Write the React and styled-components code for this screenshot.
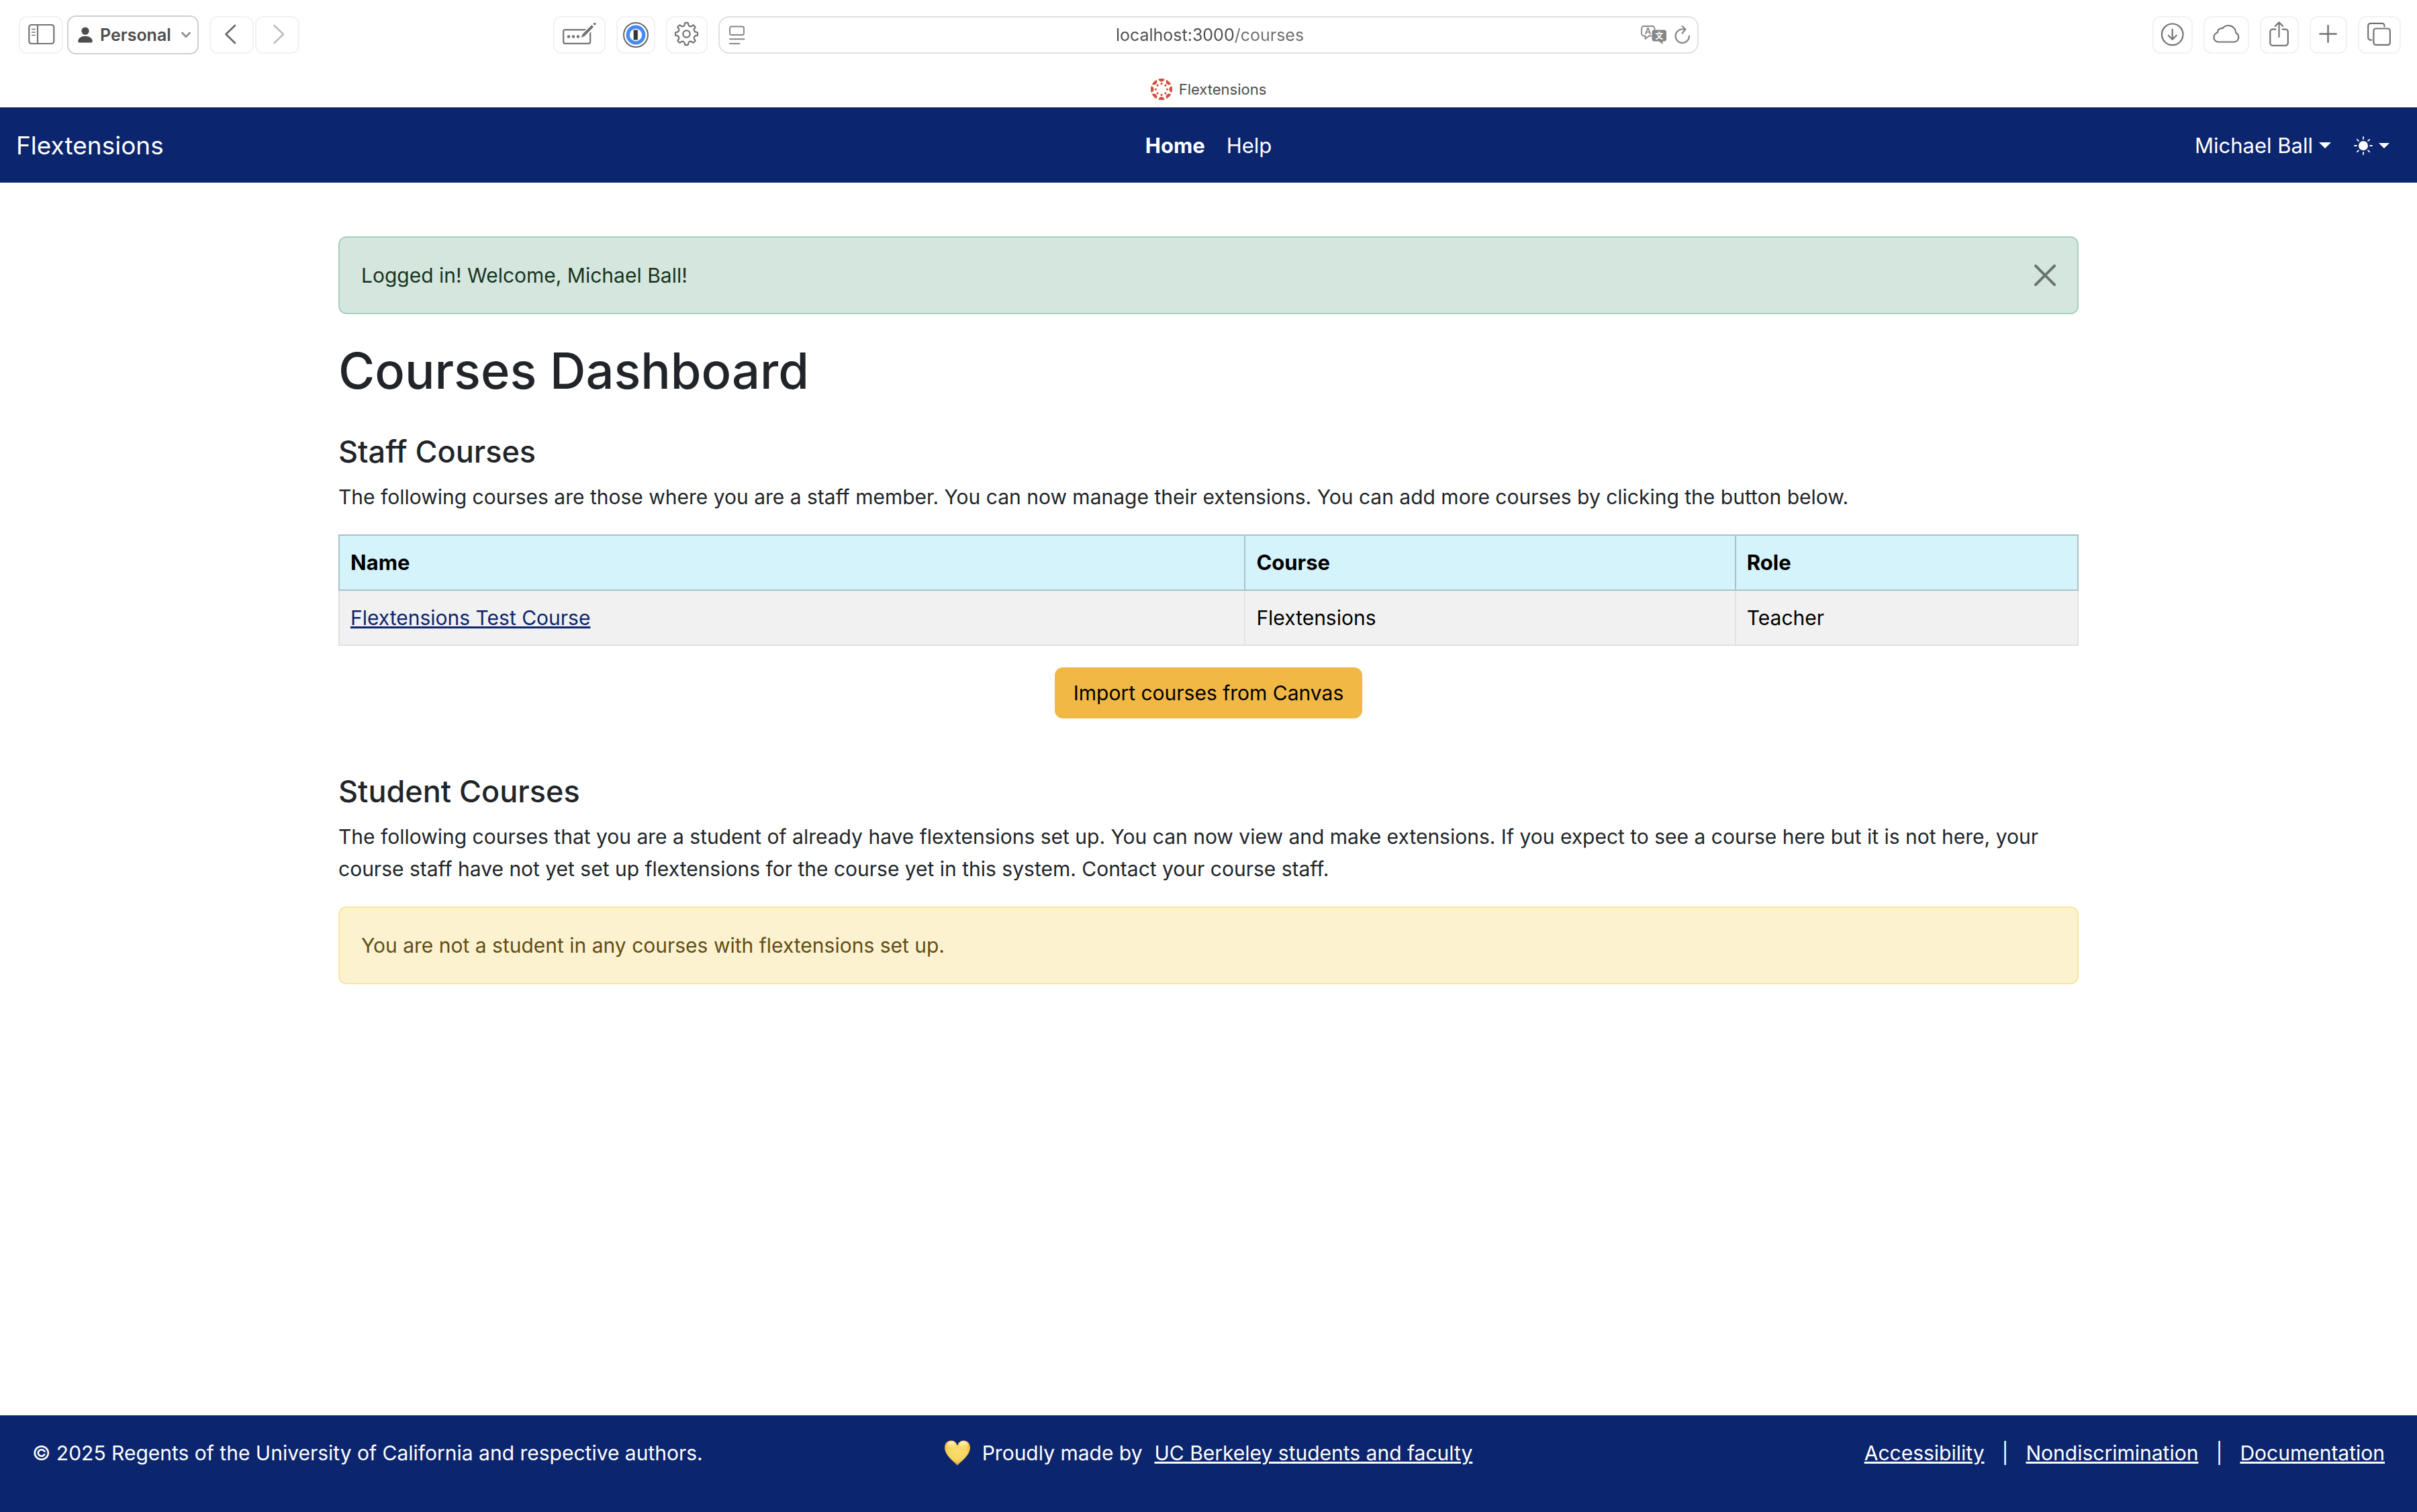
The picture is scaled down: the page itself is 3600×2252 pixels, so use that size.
import React from "react";
import styled, { createGlobalStyle, css } from "styled-components";

const NAVY = "#0b256e";
const ICON = "#737373";

const GlobalStyle = createGlobalStyle`
  *, *::before, *::after { box-sizing: border-box; }
  body {
    margin: 0;
    background: #fff;
    color: #212529;
    font-family: Inter, "Liberation Sans", sans-serif;
    font-size: 30px;
    line-height: 48px;
  }
  button, input { font: inherit; }
`;

const Page = styled.div`
  min-height: 100vh;
  display: flex;
  flex-direction: column;
`;

/* ---------- Browser chrome ---------- */

const Chrome = styled.header`
  height: 160px;
  display: flex;
  flex-direction: column;
  color: #4d4d4d;
`;

const Toolbar = styled.div`
  height: 104px;
  padding: 0 24px;
  display: grid;
  grid-template-columns: 1fr minmax(0, 1460px) 1fr;
  column-gap: 16px;
  align-items: center;
`;

const ToolSide = styled.div`
  display: flex;
  align-items: center;
  justify-content: ${(p) => (p.$end ? "flex-end" : "space-between")};
  gap: 16px;
  padding-left: 4px;
`;

const ToolGroup = styled.div`
  display: flex;
  align-items: center;
  gap: ${(p) => p.$gap}px;
`;

const ToolButton = styled.button`
  width: ${(p) => p.$w}px;
  height: 56px;
  padding: 0;
  border: 0;
  border-radius: 12px;
  background: #fff;
  box-shadow: inset 0 0 0 2px #f2f2f2;
  color: ${(p) => p.$color || ICON};
  svg { display: block; }
`;

const ProfileButton = styled.button`
  height: 58px;
  padding: 0 10px 0 14px;
  display: flex;
  align-items: center;
  gap: 11px;
  border: 2px solid #cfcfcf;
  border-radius: 13px;
  background: #fff;
  color: #4d4d4d;
  font-size: 25px;
  font-weight: 600;
  line-height: 32px;
`;

const ProfileName = styled.span`
  padding-right: 4px;
`;

const AddressBar = styled.div`
  height: 56px;
  padding: 0 10px 0 14px;
  display: flex;
  align-items: center;
  border: 2px solid #e0e0e0;
  border-radius: 16px;
  color: #858585;
`;

const AddressSide = styled.div`
  width: 80px;
  display: flex;
  justify-content: ${(p) => (p.$end ? "flex-end" : "flex-start")};
  gap: 12px;
`;

const AddressInput = styled.input`
  flex: 1;
  min-width: 0;
  border: 0;
  outline: 0;
  padding: 0;
  text-align: center;
  font-size: 25px;
  line-height: 32px;
  background: linear-gradient(90deg, #4d4d4d calc(50% + 36px), #6e6e6e calc(50% + 36px));
  background-clip: text;
  -webkit-text-fill-color: transparent;
`;

const GhostButton = styled.button`
  padding: 0;
  border: 0;
  background: none;
  color: inherit;
  svg { display: block; }
`;

const TabStrip = styled.div`
  height: 56px;
  padding-top: 2px;
  display: flex;
  align-items: center;
  justify-content: center;
  gap: 10px;
  font-size: 22px;
  line-height: 28px;
`;

/* ---------- App navigation ---------- */

const Navbar = styled.nav`
  height: 112px;
  padding: 0 24px;
  display: grid;
  grid-template-columns: 1fr auto 1fr;
  align-items: center;
  background: ${NAVY};
  border-top: 1px solid #020a4c;
  color: #fff;
  font-size: 31px;
`;

const Brand = styled.a`
  color: #fff;
  font-size: 37px;
  line-height: 60px;
  text-decoration: none;
`;

const NavLinks = styled.div`
  display: flex;
`;

const NavLink = styled.a`
  padding: 16px;
  color: #fff;
  font-weight: ${(p) => (p.$active ? 700 : 400)};
  text-decoration: none;
`;

const NavMenus = styled(NavLinks)`
  justify-content: flex-end;
`;

const MenuButton = styled.button`
  padding: 16px 17px;
  display: flex;
  align-items: center;
  gap: ${(p) => p.$gap}px;
  border: 0;
  background: none;
  color: #fff;
`;

const Caret = styled.span`
  border-style: solid;
  border-color: currentColor transparent transparent;
  border-width: ${(p) => p.$size}px ${(p) => p.$size}px 0;
`;

/* ---------- Dashboard ---------- */

const Main = styled.main`
  width: 100%;
  max-width: 2640px;
  margin: 0 auto;
  padding: 80px 24px;
  flex: 1;
`;

const tones = {
  success: css`
    background: #d5e6de;
    border-color: #a9cfbe;
    color: #16341f;
  `,
  warning: css`
    background: #fdf2d0;
    border-color: #fae5a0;
    color: #614d14;
  `,
};

const Alert = styled.div`
  padding: 32px;
  display: flex;
  align-items: center;
  justify-content: space-between;
  border: 2px solid;
  border-radius: 12px;
  ${(p) => tones[p.$tone]}
`;

const CloseButton = styled(GhostButton)`
  color: rgba(0, 0, 0, 0.5);
`;

const Title = styled.h1`
  margin: 36px 0 44px;
  font-size: 74px;
  font-weight: 500;
  line-height: 96px;
`;

const Section = styled.section`
  & + & { margin-top: 80px; }
`;

const SectionTitle = styled.h2`
  margin: 0 0 14px;
  font-size: 45px;
  font-weight: 500;
  line-height: 58px;
`;

const Lead = styled.p`
  margin: 0 0 32px;
`;

const CourseTable = styled.table`
  width: 100%;
  margin-bottom: 32px;
  border-collapse: collapse;
  table-layout: fixed;
  color: #000;
`;

const Column = styled.col`
  width: ${(p) => p.$width};
`;

const HeadCell = styled.th`
  padding: 16px;
  border: 2px solid #a9c2c9;
  background: #d5f3fb;
  font-size: 31px;
  font-weight: 700;
  text-align: left;
`;

const Cell = styled.td`
  padding: 16px;
  border: 2px solid #dee2e6;
  border-top-color: #a9c2c9;
  background: #f1f1f1;
`;

const CourseLink = styled.a`
  color: ${NAVY};
`;

const Actions = styled.div`
  display: flex;
  justify-content: center;
`;

const PrimaryButton = styled.button`
  padding: 14px 28px;
  border: 0;
  border-radius: 12px;
  background: #f1b845;
  color: #000;
`;

/* ---------- Footer ---------- */

const Footer = styled.footer`
  padding: 32px 48px 64px;
  display: grid;
  grid-template-columns: 1fr auto 1fr;
  background: ${NAVY};
  color: #fff;
`;

const FooterCredit = styled.div`
  display: flex;
  align-items: center;
  gap: 18px;
`;

const FooterLinks = styled.div`
  display: flex;
  justify-content: flex-end;
  gap: 26px;
`;

const FooterLink = styled.a`
  color: #fff;
`;

/* ---------- Icons ---------- */

const Icon = ({ w, h = 56, sw = 2.2, children }) => (
  <svg
    width={w}
    height={h}
    viewBox={`0 0 ${w} ${h}`}
    fill="none"
    stroke="currentColor"
    strokeWidth={sw}
    strokeLinecap="round"
    strokeLinejoin="round"
    aria-hidden="true"
  >
    {children}
  </svg>
);

const SidebarIcon = () => (
  <Icon w={66}>
    <rect x="15.3" y="13" width="37" height="28" rx="3.5" />
    <path d="M28 13v28" />
    <path d="M19.8 19.5h4.2M19.8 24h4.2M19.8 28.5h4.2" strokeWidth="1.7" />
  </Icon>
);

const PersonIcon = () => (
  <svg width="22" height="24" viewBox="0 0 22 24" fill="currentColor" aria-hidden="true">
    <circle cx="11" cy="6.2" r="5.6" />
    <path d="M.3 21.2C.3 17 5 13.8 11 13.8S21.7 17 21.7 21.2C21.7 22.8 21 23.4 19.6 23.4H2.4C1 23.4.3 22.8.3 21.2Z" />
  </svg>
);

const ChevronDownIcon = () => (
  <Icon w={14} h={10} sw={2.6}>
    <path d="M1.5 2l5.5 5.800L12.5 2" stroke="#8c8c90" />
  </Icon>
);

const BackIcon = () => (
  <Icon w={66} sw={2.6}>
    <path d="M38 14L24.5 27L38 40" />
  </Icon>
);

const ForwardIcon = () => (
  <Icon w={66} sw={2.6}>
    <path d="M28.5 14L42 27L28.5 40" />
  </Icon>
);

const PasswordIcon = () => (
  <Icon w={78}>
    <rect x="15.2" y="20.3" width="40" height="20.5" rx="2.5" />
    <g fill="currentColor" stroke="none">
      <circle cx="23" cy="30.5" r="2.3" />
      <circle cx="30" cy="30.5" r="2.3" />
      <circle cx="37" cy="30.5" r="2.3" />
    </g>
    <path d="M45 29L60.5 13.5" stroke="#fff" strokeWidth="8" strokeLinecap="butt" />
    <path d="M42.2 31.5L44 26.8L57.3 13.6L59.8 16L46.8 29.4Z" fill="currentColor" strokeWidth=".6" />
    <circle cx="61.7" cy="11.6" r="1.9" fill="currentColor" stroke="none" />
  </Icon>
);

const OnePasswordIcon = () => (
  <Icon w={58}>
    <circle cx="29" cy="28" r="18" stroke="#666" strokeWidth="2" />
    <circle cx="29" cy="28" r="11.8" stroke="#448af8" strokeWidth="5.2" />
    <rect x="26" y="20.5" width="6" height="15" stroke="#aaa" strokeWidth="1" fill="#333" />
  </Icon>
);

const polar = (cx, cy, r, deg) => {
  const a = (deg * Math.PI) / 180;
  return `${(cx + r * Math.cos(a)).toFixed(2)} ${(cy + r * Math.sin(a)).toFixed(2)}`;
};

const gearPath = (cx, cy) => {
  let d = "";
  for (let i = 0; i < 8; i += 1) {
    const t = i * 45 - 90;
    d += `${i ? "L" : "M"}${polar(cx, cy, 13.2, t - 14)}`;
    d += `Q${polar(cx, cy, 13.6, t - 10)} ${polar(cx, cy, 15, t - 10)}`;
    d += `Q${polar(cx, cy, 16.8, t - 9)} ${polar(cx, cy, 16.6, t - 5)}`;
    d += `L${polar(cx, cy, 16.6, t + 5)}`;
    d += `Q${polar(cx, cy, 16.8, t + 9)} ${polar(cx, cy, 15, t + 10)}`;
    d += `Q${polar(cx, cy, 13.6, t + 10)} ${polar(cx, cy, 13.2, t + 14)}`;
    d += `Q${polar(cx, cy, 11.6, t + 22.5)} ${polar(cx, cy, 13.2, t + 31)}`;
  }
  return `${d}Z`;
};

const GearIcon = () => (
  <Icon w={62}>
    <path d={gearPath(30.5, 26.5)} />
    <circle cx="30.5" cy="26.5" r="5.2" />
  </Icon>
);

const ReaderIcon = () => (
  <Icon w={24} h={28} sw={1.9}>
    <rect x="1" y="1.5" width="21" height="12.5" rx="2.5" />
    <path d="M1 20.3h21.5M1 27h14.5" />
  </Icon>
);

const TranslateIcon = () => (
  <Icon w={38} h={28} sw={1.8}>
    <path d="M15.5 15.5H12L6.5 20V15.5H4.5A3.5 3.5 0 0 1 1 12V4.5A3.5 3.5 0 0 1 4.5 1H17A3.5 3.5 0 0 1 20.5 4.5V6" />
    <path
      d="M20 6.5H34.5A3.5 3.5 0 0 1 38 10V20A3.5 3.5 0 0 1 34.5 23.5H32.5V28L27 23.5H20A3.5 3.5 0 0 1 16.5 20V10A3.5 3.5 0 0 1 20 6.5Z"
      fill="currentColor"
      stroke="none"
    />
    <text x="10.5" y="13" fontSize="13" fontWeight="600" textAnchor="middle" fill="currentColor" stroke="none">
      A
    </text>
    <text
      x="27.2"
      y="19.5"
      fontSize="12"
      fontWeight="700"
      fontFamily='"Noto Sans CJK SC", sans-serif'
      textAnchor="middle"
      fill="#fff"
      stroke="none"
    >
      文
    </text>
  </Icon>
);

const ReloadIcon = () => (
  <Icon w={24} h={28}>
    <path d="M22 15.5A10.2 10.2 0 1 1 11.8 5.5H16" />
    <path d="M11.5 1L16.5 5.8L11.5 11.5" />
  </Icon>
);

const DownloadIcon = () => (
  <Icon w={60}>
    <circle cx="29.7" cy="27.3" r="15.8" />
    <path d="M29.7 19.5V34.5M23.7 28.8L29.7 34.8L35.7 28.8" />
  </Icon>
);

const CloudIcon = () => (
  <Icon w={68}>
    <path d="M21.5 38.5H46A7.2 7.2 0 0 0 48.3 25A11.2 11.2 0 0 0 28.3 18.3A6.2 6.2 0 0 0 20.8 24.6A7.1 7.1 0 0 0 21.5 38.5Z" />
  </Icon>
);

const ShareIcon = () => (
  <Icon w={58}>
    <path d="M23.3 19.7H18.8A3.5 3.5 0 0 0 15.3 23.2V40.3A3.5 3.5 0 0 0 18.8 43.8H38.3A3.5 3.5 0 0 0 41.8 40.3V23.2A3.5 3.5 0 0 0 38.3 19.7H33.8" />
    <path d="M28.5 31V9.5M22.8 15L28.5 9.3L34.2 15" />
  </Icon>
);

const PlusIcon = () => (
  <Icon w={56} sw={2.5}>
    <path d="M15.3 26.5H39.7M27.5 14.3V38.7" />
  </Icon>
);

const TabsIcon = () => (
  <Icon w={64}>
    <rect x="23.4" y="18.5" width="24.5" height="24.4" rx="3.5" />
    <path d="M20.5 35.6H18.7A3.5 3.5 0 0 1 15.2 32.1V14.3A3.5 3.5 0 0 1 18.7 10.8H36A3.5 3.5 0 0 1 39.5 14.3V15.5" />
  </Icon>
);

const RAYS = [0, 45, 90, 135, 180, 225, 270, 315];

const CanvasLogo = () => (
  <svg width="32" height="32" viewBox="0 0 32 32" fill="#d64c3b" aria-hidden="true">
    <clipPath id="disc">
      <circle cx="16" cy="16" r="16" />
    </clipPath>
    <g clipPath="url(#disc)">
      {RAYS.map((a) => (
        <g key={a} transform={`rotate(${a} 16 16)`}>
          <circle cx="16" cy="0" r="4.7" />
          <circle cx="16" cy="7.6" r="1.6" />
        </g>
      ))}
    </g>
  </svg>
);

const SunIcon = () => (
  <Icon w={28} h={28} sw={1.8}>
    <circle cx="14" cy="14" r="7" fill="currentColor" stroke="none" />
    {RAYS.map((a) => (
      <path key={a} d="M14 1V4" transform={`rotate(${a} 14 14)`} />
    ))}
  </Icon>
);

const CloseIcon = () => (
  <Icon w={32} h={32} sw={4}>
    <path d="M2 2L30 30M30 2L2 30" />
  </Icon>
);

const HeartIcon = () => (
  <svg width="38" height="38" viewBox="0 0 38 38" aria-hidden="true">
    <defs>
      <radialGradient id="heart" cx=".5" cy=".4" r=".62">
        <stop offset="0" stopColor="#fae070" />
        <stop offset=".6" stopColor="#f8d45f" />
        <stop offset="1" stopColor="#e29a3e" />
      </radialGradient>
      <linearGradient id="shine" x1="0" y1="0" x2="0" y2="1">
        <stop offset="0" stopColor="#fffbe0" />
        <stop offset="1" stopColor="#fae070" stopOpacity="0" />
      </linearGradient>
    </defs>
    <path
      d="M19 37.8C17.5 34.5 0 24 0 11C0 4.5 4.5 .5 9.8 .5C14.5 .5 17.6 3.5 19 8.5C20.4 3.5 23.5 .5 28.2 .5C33.5 .5 38 4.5 38 11C38 24 20.5 34.5 19 37.8Z"
      fill="url(#heart)"
    />
    <ellipse cx="9.5" cy="7.5" rx="6.5" ry="5.5" fill="url(#shine)" />
    <ellipse cx="28.5" cy="7.5" rx="6.5" ry="5.5" fill="url(#shine)" />
  </svg>
);

/* ---------- Data ---------- */

const leftTools = [
  { label: "AutoFill passwords", w: 78, Glyph: PasswordIcon },
  { label: "1Password", w: 58, Glyph: OnePasswordIcon },
  { label: "Extension settings", w: 62, Glyph: GearIcon },
];

const rightTools = [
  { label: "Downloads", w: 60, Glyph: DownloadIcon },
  { label: "iCloud tabs", w: 68, Glyph: CloudIcon },
  { label: "Share", w: 58, Glyph: ShareIcon },
  { label: "New tab", w: 56, Glyph: PlusIcon },
  { label: "Tab overview", w: 64, Glyph: TabsIcon },
];

const courses = [{ name: "Flextensions Test Course", course: "Flextensions", role: "Teacher" }];

const Tool = ({ label, w, color, Glyph }) => (
  <ToolButton type="button" aria-label={label} $w={w} $color={color}>
    <Glyph />
  </ToolButton>
);

export default function App() {
  return (
    <Page>
      <GlobalStyle />
      <Chrome>
        <Toolbar>
          <ToolSide>
            <ToolGroup $gap={16}>
              <ToolGroup $gap={6}>
                <Tool label="Show sidebar" w={66} Glyph={SidebarIcon} />
                <ProfileButton type="button" aria-haspopup="menu">
                  <PersonIcon />
                  <ProfileName>Personal</ProfileName>
                  <ChevronDownIcon />
                </ProfileButton>
              </ToolGroup>
              <ToolGroup $gap={2}>
                <Tool label="Back" w={66} color="#666" Glyph={BackIcon} />
                <Tool label="Forward" w={66} color="#bdbdbd" Glyph={ForwardIcon} />
              </ToolGroup>
            </ToolGroup>
            <ToolGroup $gap={16}>
              {leftTools.map((t) => (
                <Tool key={t.label} {...t} />
              ))}
            </ToolGroup>
          </ToolSide>
          <AddressBar>
            <AddressSide>
              <GhostButton type="button" aria-label="Reader">
                <ReaderIcon />
              </GhostButton>
            </AddressSide>
            <AddressInput type="text" aria-label="Address" defaultValue="localhost:3000/courses" />
            <AddressSide $end>
              <GhostButton type="button" aria-label="Translate">
                <TranslateIcon />
              </GhostButton>
              <GhostButton type="button" aria-label="Reload">
                <ReloadIcon />
              </GhostButton>
            </AddressSide>
          </AddressBar>
          <ToolSide $end>
            {rightTools.map((t) => (
              <Tool key={t.label} {...t} />
            ))}
          </ToolSide>
        </Toolbar>
        <TabStrip>
          <CanvasLogo />
          <span>Flextensions</span>
        </TabStrip>
      </Chrome>

      <Navbar>
        <div>
          <Brand href="#">Flextensions</Brand>
        </div>
        <NavLinks>
          <NavLink href="#" $active>
            Home
          </NavLink>
          <NavLink href="#">Help</NavLink>
        </NavLinks>
        <NavMenus>
          <MenuButton type="button" aria-haspopup="menu" $gap={9}>
            Michael Ball
            <Caret $size={9} />
          </MenuButton>
          <MenuButton type="button" aria-haspopup="menu" aria-label="Theme" $gap={9}>
            <SunIcon />
            <Caret $size={8} />
          </MenuButton>
        </NavMenus>
      </Navbar>

      <Main>
        <Alert $tone="success" role="alert">
          <span>Logged in! Welcome, Michael Ball!</span>
          <CloseButton type="button" aria-label="Close">
            <CloseIcon />
          </CloseButton>
        </Alert>
        <Title>Courses Dashboard</Title>

        <Section>
          <SectionTitle>Staff Courses</SectionTitle>
          <Lead>
            The following courses are those where you are a staff member. You can now manage their extensions. You can
            add more courses by clicking the button below.
          </Lead>
          <CourseTable>
            <colgroup>
              <Column $width="52.1%" />
              <Column $width="28.2%" />
              <Column />
            </colgroup>
            <thead>
              <tr>
                <HeadCell scope="col">Name</HeadCell>
                <HeadCell scope="col">Course</HeadCell>
                <HeadCell scope="col">Role</HeadCell>
              </tr>
            </thead>
            <tbody>
              {courses.map((c) => (
                <tr key={c.name}>
                  <Cell>
                    <CourseLink href="#">{c.name}</CourseLink>
                  </Cell>
                  <Cell>{c.course}</Cell>
                  <Cell>{c.role}</Cell>
                </tr>
              ))}
            </tbody>
          </CourseTable>
          <Actions>
            <PrimaryButton type="button">Import courses from Canvas</PrimaryButton>
          </Actions>
        </Section>

        <Section>
          <SectionTitle>Student Courses</SectionTitle>
          <Lead>
            The following courses that you are a student of already have flextensions set up. You can now view and make
            extensions. If you expect to see a course here but it is not here, your course staff have not yet set up
            flextensions for the course yet in this system. Contact your course staff.
          </Lead>
          <Alert $tone="warning">You are not a student in any courses with flextensions set up.</Alert>
        </Section>
      </Main>

      <Footer>
        <span>© 2025 Regents of the University of California and respective authors.</span>
        <FooterCredit>
          <HeartIcon />
          <span>Proudly made by</span>
          <FooterLink href="#">UC Berkeley students and faculty</FooterLink>
        </FooterCredit>
        <FooterLinks>
          <FooterLink href="#">Accessibility</FooterLink>
          <span>|</span>
          <FooterLink href="#">Nondiscrimination</FooterLink>
          <span>|</span>
          <FooterLink href="#">Documentation</FooterLink>
        </FooterLinks>
      </Footer>
    </Page>
  );
}
